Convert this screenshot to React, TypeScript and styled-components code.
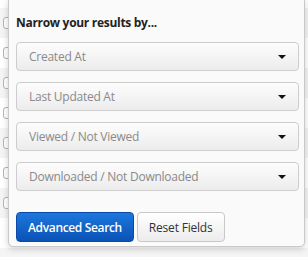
import React from "react";
import styled, { createGlobalStyle } from "styled-components";

const Global = createGlobalStyle`
  html, body { margin: 0; padding: 0; background: #fff; overflow: hidden; }
  body { font-family: "Open Sans", "Noto Sans", sans-serif; }
`;

const Page = styled.div`
  position: relative;
  width: 308px;
  height: 257px;
  overflow: hidden;
`;

const List = styled.div`
  display: flex;
  flex-direction: column;
  padding-top: 8px;
`;

const Row = styled.div<{ $striped: boolean }>`
  height: 30px;
  display: flex;
  align-items: center;
  padding-left: 3px;
  background: ${(p) => (p.$striped ? "#f4f4f4" : "#fff")};
`;

const Check = styled.span`
  width: 12px;
  height: 12px;
  box-sizing: border-box;
  border: 1px solid #b5b5b5;
  border-radius: 3px;
  background: #fff;
`;

const Panel = styled.div`
  position: absolute;
  left: 8px;
  top: -1px;
  width: 297px;
  height: 248px;
  box-sizing: border-box;
  background: #fafafa;
  border: 1px solid #c9c9c9;
  border-radius: 0 0 5px 5px;
  box-shadow: 0 2px 6px rgba(0, 0, 0, 0.18);
  padding: 14px 5px 0 7px;
  display: flex;
  flex-direction: column;
`;

const Title = styled.div`
  font-size: 12px;
  font-weight: 700;
  letter-spacing: -0.3px;
  line-height: 18px;
  color: #222;
  margin-bottom: 10px;
`;

const Selects = styled.div`
  display: flex;
  flex-direction: column;
  gap: 11px;
`;

const Select = styled.div`
  height: 29px;
  box-sizing: border-box;
  border: 1px solid #cdcdcd;
  border-radius: 4px;
  background: linear-gradient(#fdfdfd, #ececec);
  display: flex;
  align-items: center;
  justify-content: space-between;
  padding: 0 12px;
  font-size: 12px;
  letter-spacing: -0.25px;
  color: #8a8a8a;
`;

const Caret = styled.span`
  width: 0;
  height: 0;
  border-left: 4px solid transparent;
  border-right: 4px solid transparent;
  border-top: 4px solid #111;
  margin-top: 1px;
`;

const Buttons = styled.div`
  display: flex;
  gap: 3px;
  margin-top: 21px;
`;

const Button = styled.button<{ $primary?: boolean }>`
  height: 30px;
  box-sizing: border-box;
  border-radius: 4px;
  font-family: "Open Sans", "Noto Sans", sans-serif;
  font-size: 12px;
  font-weight: ${(p) => (p.$primary ? 600 : 400)};
  letter-spacing: ${(p) => (p.$primary ? "-0.35px" : "-0.2px")};
  padding: 0 11px;
  cursor: pointer;
  color: ${(p) => (p.$primary ? "#fff" : "#333")};
  border: 1px solid ${(p) => (p.$primary ? "#0a4aa6" : "#c8c8c8")};
  background: ${(p) =>
    p.$primary
      ? "linear-gradient(#1c77dc, #0b52b6)"
      : "linear-gradient(#ffffff, #ececec)"};
`;

const labels = [
  "Created At",
  "Last Updated At",
  "Viewed / Not Viewed",
  "Downloaded / Not Downloaded",
];

export default function App() {
  return (
    <Page>
      <Global />
      <List>
        {Array.from({ length: 9 }).map((_, i) => (
          <Row key={i} $striped={i % 2 === 0}>
            {i < 7 && <Check />}
          </Row>
        ))}
      </List>
      <Panel>
        <Title>Narrow your results by...</Title>
        <Selects>
          {labels.map((l) => (
            <Select key={l}>
              <span>{l}</span>
              <Caret />
            </Select>
          ))}
        </Selects>
        <Buttons>
          <Button $primary>Advanced Search</Button>
          <Button>Reset Fields</Button>
        </Buttons>
      </Panel>
    </Page>
  );
}
